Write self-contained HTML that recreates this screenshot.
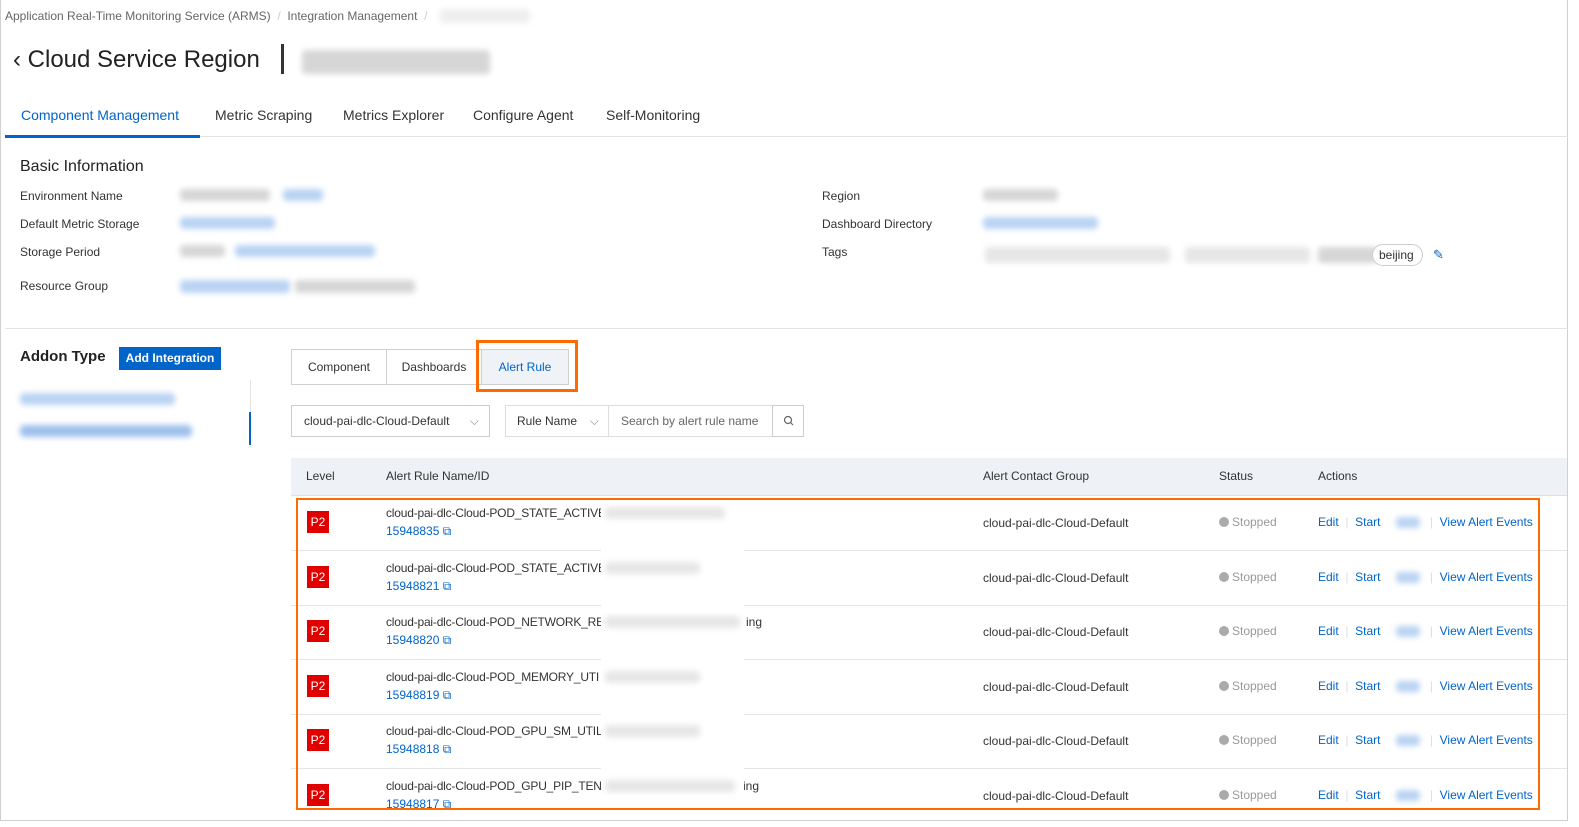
<!DOCTYPE html>
<html><head><meta charset="utf-8"><style>
*{box-sizing:border-box;margin:0;padding:0}
body{width:1579px;height:827px;background:#fff;font-family:"Liberation Sans",sans-serif;color:#333;position:relative;overflow:hidden;font-size:12px}
.a{position:absolute;white-space:nowrap}
.blur{position:absolute;border-radius:4px;filter:blur(3px)}
.g{background:#d6d6d6}.b{background:#b9d3f3}
.lnk{color:#0064c8}
.row{position:absolute;left:291px;width:1276px;height:55px;border-bottom:1px solid #e5e5e5}
.p2{position:absolute;left:16px;top:15px;width:22px;height:22px;background:#e00000;color:#fff;font-size:12px;text-align:center;line-height:22px}
.nm{letter-spacing:-0.2px}
.dot{display:inline-block;width:10px;height:10px;border-radius:50%;background:#aaa;vertical-align:-1px;margin-right:3px}
</style></head><body>
<div class="a" style="left:0;top:0;width:1568px;height:821px;border:1px solid #d0d0d0;border-top:none"></div>
<div class="a" style="left:5px;top:9px;color:#666;font-size:12px">Application Real-Time Monitoring Service (ARMS) &nbsp;<span style="color:#ccc">/</span>&nbsp; Integration Management &nbsp;<span style="color:#ccc">/</span></div>
<div class="blur g" style="left:440px;top:9px;width:90px;height:14px;opacity:.4"></div>
<div class="a" style="left:13px;top:46px;font-size:24px;color:#222">‹&nbsp;Cloud Service Region</div>
<div class="a" style="left:281px;top:44px;width:3px;height:30px;background:#333"></div>
<div class="blur g" style="left:302px;top:50px;width:188px;height:24px;background:#bbb;opacity:.6"></div>
<div class="a" style="left:21px;top:107px;font-size:14px;color:#0064c8">Component Management</div>
<div class="a" style="left:215px;top:107px;font-size:14px">Metric Scraping</div>
<div class="a" style="left:343px;top:107px;font-size:14px">Metrics Explorer</div>
<div class="a" style="left:473px;top:107px;font-size:14px">Configure Agent</div>
<div class="a" style="left:606px;top:107px;font-size:14px">Self-Monitoring</div>
<div class="a" style="left:5px;top:136px;width:1563px;height:1px;background:#e3e3e3"></div>
<div class="a" style="left:5px;top:135px;width:195px;height:3px;background:#0064c8"></div>
<div class="a" style="left:20px;top:158px;font-size:16px;color:#222">Basic Information</div>
<div class="a" style="left:20px;top:189px">Environment Name</div>
<div class="a" style="left:20px;top:217px">Default Metric Storage</div>
<div class="a" style="left:20px;top:245px">Storage Period</div>
<div class="a" style="left:20px;top:279px">Resource Group</div>
<div class="blur g" style="left:180px;top:189px;width:90px;height:12px"></div><div class="blur b" style="left:283px;top:189px;width:40px;height:12px"></div>
<div class="blur b" style="left:180px;top:217px;width:95px;height:12px"></div>
<div class="blur g" style="left:180px;top:245px;width:45px;height:12px"></div><div class="blur b" style="left:235px;top:245px;width:140px;height:12px"></div>
<div class="blur b" style="left:180px;top:280px;width:110px;height:13px"></div><div class="blur g" style="left:295px;top:280px;width:120px;height:13px"></div>
<div class="a" style="left:822px;top:189px">Region</div>
<div class="a" style="left:822px;top:217px">Dashboard Directory</div>
<div class="a" style="left:822px;top:245px">Tags</div>
<div class="blur g" style="left:983px;top:189px;width:75px;height:12px"></div>
<div class="blur b" style="left:983px;top:217px;width:115px;height:12px"></div>
<div class="blur g" style="left:985px;top:247px;width:185px;height:16px;opacity:.6"></div><div class="blur g" style="left:1185px;top:247px;width:125px;height:16px;opacity:.6"></div><div class="blur g" style="left:1318px;top:247px;width:60px;height:16px"></div>
<div class="a" style="left:1372px;top:244px;width:51px;height:22px;border:1px solid #ccc;border-radius:11px;padding-left:6px;line-height:20px;background:#fff">beijing</div>
<div class="a" style="left:1433px;top:247px;color:#0064c8;font-size:13px">✎</div>
<div class="a" style="left:5px;top:328px;width:1563px;height:1px;background:#e3e3e3"></div>
<div class="a" style="left:20px;top:348px;font-size:15px;font-weight:bold;color:#222">Addon Type</div>
<div class="a" style="left:119px;top:347px;width:102px;height:23px;background:#0064c8;color:#fff;text-align:center;line-height:23px;font-size:12px;font-weight:bold">Add Integration</div>
<div class="a" style="left:250px;top:380px;width:1px;height:65px;background:#e3e3e3"></div>
<div class="a" style="left:249px;top:412px;width:2px;height:33px;background:#0064c8"></div>
<div class="blur b" style="left:20px;top:393px;width:155px;height:12px"></div>
<div class="blur b" style="left:20px;top:425px;width:172px;height:12px;background:#9fc0ec"></div>
<div class="a" style="left:291px;top:349px;width:96px;height:36px;border:1px solid #d0d0d0;text-align:center;line-height:35px">Component</div>
<div class="a" style="left:386px;top:349px;width:96px;height:36px;border:1px solid #d0d0d0;text-align:center;line-height:35px">Dashboards</div>
<div class="a" style="left:481px;top:349px;width:88px;height:36px;border:1px solid #d0d0d0;background:#eff3f8;color:#0064c8;text-align:center;line-height:35px">Alert Rule</div>
<div class="a" style="left:476px;top:340px;width:102px;height:52px;border:3px solid #ff6a00"></div>
<div class="a" style="left:291px;top:405px;width:199px;height:32px;border:1px solid #ccc;padding-left:12px;line-height:30px">cloud-pai-dlc-Cloud-Default<span style="position:absolute;right:10px;color:#888">⌵</span></div>
<div class="a" style="left:505px;top:405px;width:104px;height:32px;border:1px solid #ddd;padding-left:11px;line-height:30px">Rule Name<span style="position:absolute;right:9px;color:#888">⌵</span></div>
<div class="a" style="left:608px;top:405px;width:165px;height:32px;border:1px solid #ddd;padding-left:12px;line-height:30px;color:#666">Search by alert rule name</div>
<div class="a" style="left:772px;top:405px;width:32px;height:32px;border:1px solid #ccc"><svg width="30" height="30"><circle cx="15" cy="14" r="3.5" fill="none" stroke="#666" stroke-width="1.2"/><path d="M17.5 16.5 L20 19" stroke="#666" stroke-width="1.2"/></svg></div>
<div class="a" style="left:291px;top:458px;width:1276px;height:38px;background:#eef1f6;border-bottom:1px solid #e0e0e0"></div>
<div class="a" style="left:306px;top:469px">Level</div>
<div class="a" style="left:386px;top:469px">Alert Rule Name/ID</div>
<div class="a" style="left:983px;top:469px">Alert Contact Group</div>
<div class="a" style="left:1219px;top:469px">Status</div>
<div class="a" style="left:1318px;top:469px">Actions</div>

<div class="row" style="top:496px"><div class="p2">P2</div><div class="a nm" style="left:95px;top:10px">cloud-pai-dlc-Cloud-POD_STATE_ACTIVE</div><div class="a lnk" style="left:95px;top:28px">15948835 ⧉</div></div>
<div class="row" style="top:551px"><div class="p2">P2</div><div class="a nm" style="left:95px;top:10px">cloud-pai-dlc-Cloud-POD_STATE_ACTIVE</div><div class="a lnk" style="left:95px;top:28px">15948821 ⧉</div></div>
<div class="row" style="top:605px"><div class="p2">P2</div><div class="a nm" style="left:95px;top:10px">cloud-pai-dlc-Cloud-POD_NETWORK_RE</div><div class="a" style="left:455px;top:10px">ing</div><div class="a lnk" style="left:95px;top:28px">15948820 ⧉</div></div>
<div class="row" style="top:660px"><div class="p2">P2</div><div class="a nm" style="left:95px;top:10px">cloud-pai-dlc-Cloud-POD_MEMORY_UTI</div><div class="a lnk" style="left:95px;top:28px">15948819 ⧉</div></div>
<div class="row" style="top:714px"><div class="p2">P2</div><div class="a nm" style="left:95px;top:10px">cloud-pai-dlc-Cloud-POD_GPU_SM_UTIL</div><div class="a lnk" style="left:95px;top:28px">15948818 ⧉</div></div>
<div class="row" style="top:769px;border:none"><div class="p2">P2</div><div class="a nm" style="left:95px;top:10px">cloud-pai-dlc-Cloud-POD_GPU_PIP_TENS</div><div class="a" style="left:452px;top:10px">ing</div><div class="a lnk" style="left:95px;top:28px">15948817 ⧉</div></div>
<div class="a" style="left:601px;top:497px;width:143px;height:320px;background:#fff"></div>
<div class="blur g" style="left:605px;top:507px;width:120px;height:12px;opacity:.6"></div>
<div class="blur g" style="left:605px;top:562px;width:95px;height:12px;opacity:.6"></div>
<div class="blur g" style="left:605px;top:616px;width:135px;height:12px;opacity:.6"></div>
<div class="blur g" style="left:605px;top:671px;width:95px;height:12px;opacity:.6"></div>
<div class="blur g" style="left:605px;top:725px;width:95px;height:12px;opacity:.6"></div>
<div class="blur g" style="left:605px;top:780px;width:130px;height:12px;opacity:.6"></div>
<div class="a" style="left:983px;top:516px">cloud-pai-dlc-Cloud-Default</div>
<div class="a" style="left:983px;top:571px">cloud-pai-dlc-Cloud-Default</div>
<div class="a" style="left:983px;top:625px">cloud-pai-dlc-Cloud-Default</div>
<div class="a" style="left:983px;top:680px">cloud-pai-dlc-Cloud-Default</div>
<div class="a" style="left:983px;top:734px">cloud-pai-dlc-Cloud-Default</div>
<div class="a" style="left:983px;top:789px">cloud-pai-dlc-Cloud-Default</div>
<div class="a" style="left:1219px;top:515px;color:#999;line-height:54.6px;margin-top:-20px"><span class="dot"></span>Stopped<br><span class="dot"></span>Stopped<br><span class="dot"></span>Stopped<br><span class="dot"></span>Stopped<br><span class="dot"></span>Stopped<br><span class="dot"></span>Stopped</div>
<div class="a lnk" style="left:1318px;top:515px;line-height:54.6px;margin-top:-20px">Edit <span style="color:#ddd">&nbsp;|&nbsp;</span> Start <span style="display:inline-block;width:46px"></span><span style="color:#ddd">|</span>&nbsp; View Alert Events<br>Edit <span style="color:#ddd">&nbsp;|&nbsp;</span> Start <span style="display:inline-block;width:46px"></span><span style="color:#ddd">|</span>&nbsp; View Alert Events<br>Edit <span style="color:#ddd">&nbsp;|&nbsp;</span> Start <span style="display:inline-block;width:46px"></span><span style="color:#ddd">|</span>&nbsp; View Alert Events<br>Edit <span style="color:#ddd">&nbsp;|&nbsp;</span> Start <span style="display:inline-block;width:46px"></span><span style="color:#ddd">|</span>&nbsp; View Alert Events<br>Edit <span style="color:#ddd">&nbsp;|&nbsp;</span> Start <span style="display:inline-block;width:46px"></span><span style="color:#ddd">|</span>&nbsp; View Alert Events<br>Edit <span style="color:#ddd">&nbsp;|&nbsp;</span> Start <span style="display:inline-block;width:46px"></span><span style="color:#ddd">|</span>&nbsp; View Alert Events</div>
<div class="blur b" style="left:1396px;top:517px;width:24px;height:11px"></div>
<div class="blur b" style="left:1396px;top:572px;width:24px;height:11px"></div>
<div class="blur b" style="left:1396px;top:626px;width:24px;height:11px"></div>
<div class="blur b" style="left:1396px;top:681px;width:24px;height:11px"></div>
<div class="blur b" style="left:1396px;top:735px;width:24px;height:11px"></div>
<div class="blur b" style="left:1396px;top:790px;width:24px;height:11px"></div>
<div class="a" style="left:296px;top:498px;width:1244px;height:312px;border:2.5px solid #ff6a00"></div>
</body></html>
